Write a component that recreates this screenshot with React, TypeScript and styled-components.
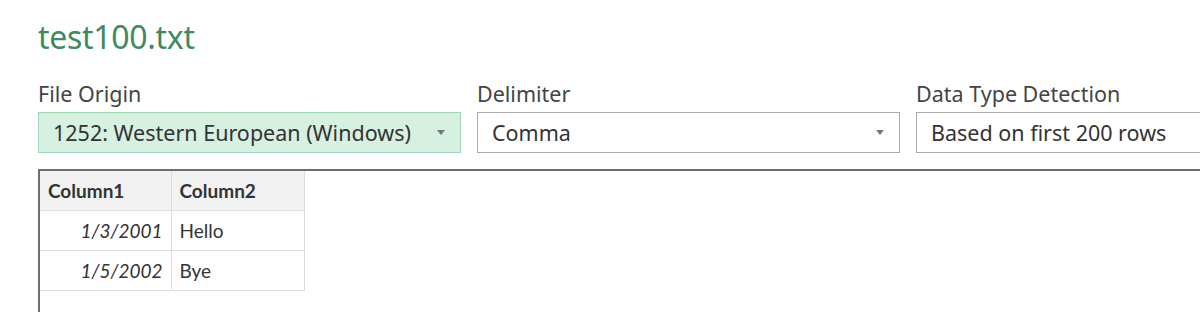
import React from "react";
import styled, { createGlobalStyle } from "styled-components";

const Global = createGlobalStyle`
  html, body { margin: 0; padding: 0; background: #fff; }
  body { width: 1200px; height: 312px; overflow: hidden; font-family: "Noto Sans", "Open Sans", sans-serif; }
`;

const Page = styled.div`
  padding: 15px 0 0 38px;
  width: 1300px;
`;

const Title = styled.h1`
  margin: 0;
  font-family: "Noto Sans", sans-serif;
  font-weight: 400;
  font-size: 32px;
  line-height: 44px;
  color: #3f8a5f;
  letter-spacing: -0.3px;
`;

const Fields = styled.div`
  display: grid;
  grid-template-columns: 423px 423px 423px;
  column-gap: 16px;
  margin-top: 21px;
`;

const Field = styled.div`
  display: flex;
  flex-direction: column;
`;

const Label = styled.div`
  font-size: 21.5px;
  line-height: 28px;
  color: #444;
  margin-bottom: 4px;
`;

const Select = styled.div<{ $active?: boolean }>`
  height: 41px;
  box-sizing: border-box;
  border: 1px solid ${(p) => (p.$active ? "#9fd8b6" : "#ababab")};
  background: ${(p) => (p.$active ? "#d6f0e1" : "#fff")};
  display: flex;
  align-items: center;
  padding: 0 12px 0 14px;
  font-size: 21.5px;
  color: #333;
`;

const Value = styled.span`
  flex: 1;
  white-space: nowrap;
`;

const Arrow = styled.span`
  width: 0;
  height: 0;
  border-left: 4px solid transparent;
  border-right: 4px solid transparent;
  border-top: 5px solid #777;
  margin-right: 3px;
`;

const Preview = styled.div`
  margin-top: 16px;
  border-top: 2px solid #6e6e6e;
  border-left: 2px solid #6e6e6e;
  height: 200px;
`;

const Table = styled.table`
  border-collapse: collapse;
  font-family: "Lato", "Noto Sans", sans-serif;
  font-size: 19px;
  color: #333;
`;

const Th = styled.th<{ $w: number }>`
  width: ${(p) => p.$w}px;
  background: #f2f2f2;
  border: 1px solid #dedede;
  border-top: none;
  border-left: none;
  height: 39px;
  padding: 0 8px;
  text-align: left;
  font-weight: 700;
  box-sizing: border-box;
`;

const Td = styled.td<{ $right?: boolean; $italic?: boolean }>`
  border: 1px solid #dedede;
  border-left: none;
  height: 40px;
  padding: 0 8px;
  text-align: ${(p) => (p.$right ? "right" : "left")};
  font-style: ${(p) => (p.$italic ? "italic" : "normal")};
  box-sizing: border-box;
`;

const rows = [
  ["1/3/2001", "Hello"],
  ["1/5/2002", "Bye"],
];

export default function App() {
  return (
    <>
      <Global />
      <Page>
        <Title>test100.txt</Title>
        <Fields>
          <Field>
            <Label>File Origin</Label>
            <Select $active>
              <Value>1252: Western European (Windows)</Value>
              <Arrow />
            </Select>
          </Field>
          <Field>
            <Label>Delimiter</Label>
            <Select>
              <Value>Comma</Value>
              <Arrow />
            </Select>
          </Field>
          <Field>
            <Label>Data Type Detection</Label>
            <Select>
              <Value>Based on first 200 rows</Value>
              <Arrow />
            </Select>
          </Field>
        </Fields>
        <Preview>
          <Table>
            <thead>
              <tr>
                <Th $w={131}>Column1</Th>
                <Th $w={133}>Column2</Th>
              </tr>
            </thead>
            <tbody>
              {rows.map((r) => (
                <tr key={r[0]}>
                  <Td $right $italic>{r[0]}</Td>
                  <Td>{r[1]}</Td>
                </tr>
              ))}
            </tbody>
          </Table>
        </Preview>
      </Page>
    </>
  );
}
